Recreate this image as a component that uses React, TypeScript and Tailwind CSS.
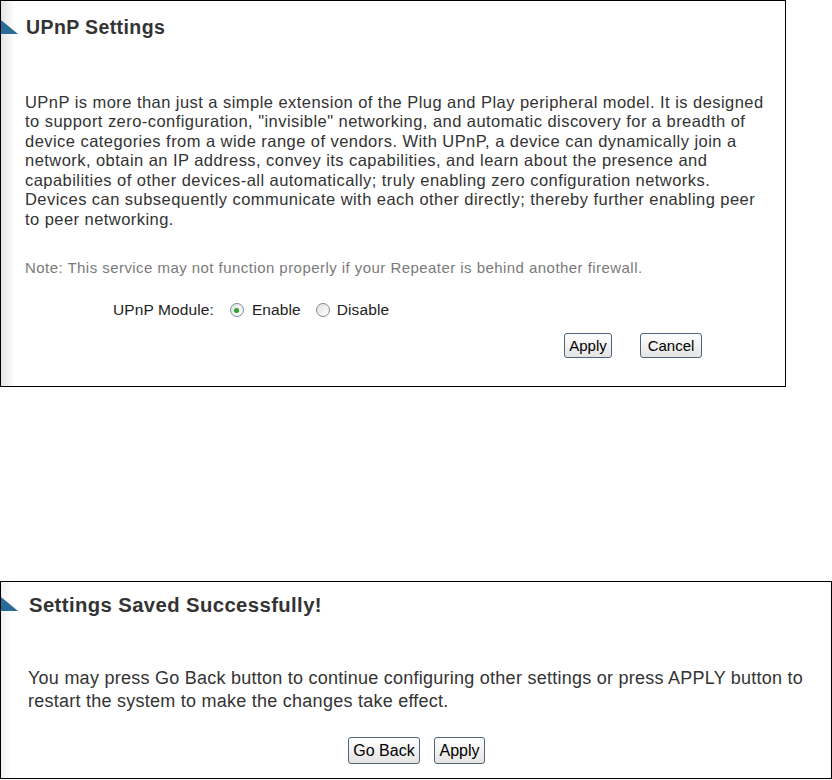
const font = "font-['Liberation_Sans',Arial,sans-serif]";

const upnpLines = [
  'UPnP is more than just a simple extension of the Plug and Play peripheral model. It is designed',
  'to support zero-configuration, "invisible" networking, and automatic discovery for a breadth of',
  'device categories from a wide range of vendors. With UPnP, a device can dynamically join a',
  'network, obtain an IP address, convey its capabilities, and learn about the presence and',
  'capabilities of other devices-all automatically; truly enabling zero configuration networks.',
  'Devices can subsequently communicate with each other directly; thereby further enabling peer',
  'to peer networking.',
];

const savedLines = [
  'You may press Go Back button to continue configuring other settings or press APPLY button to',
  'restart the system to make the changes take effect.',
];

function Triangle() {
  return (
    <svg width="17" height="14" viewBox="0 0 17 14" className="mb-[4px] shrink-0">
      <polygon points="0,0 17,14 0,14" fill="#2a6c97" />
    </svg>
  );
}

function Radio({ checked }: { checked?: boolean }) {
  return (
    <span className="inline-flex h-[14px] w-[14px] items-center justify-center rounded-full border border-[#7a8a99] bg-gradient-to-br from-[#e2e2e2] to-white">
      {checked && <span className="h-[5px] w-[5px] rounded-full bg-[#2aa52a]" />}
    </span>
  );
}

function Btn({ label, w }: { label: string; w: string }) {
  return (
    <button
      className={`${w} rounded-[3px] border border-[#4f6478] bg-gradient-to-b from-white to-[#e4e4e4] text-black leading-none`}
    >
      {label}
    </button>
  );
}

export default function App() {
  return (
    <div className={`${font} h-[780px] w-[832px] bg-white text-[#333]`}>
      {/* UPnP settings panel */}
      <div className="flex h-[387px] w-[786px] flex-col border border-black bg-[linear-gradient(to_right,#e4e4e4,#fff_14px)]">
        <div className="mt-[17px] flex items-end">
          <Triangle />
          <h1 className="ml-[8px] text-[19.5px] font-bold leading-none tracking-[0.4px] text-[#333]">UPnP Settings</h1>
        </div>
        <p className="mt-[55px] pl-[24px] text-[16.5px] leading-[19.5px] tracking-[0.45px] whitespace-nowrap">
          {upnpLines.map((l, i) => (
            <span key={i} className="block">{l}</span>
          ))}
        </p>
        <p className="mt-[30px] pl-[24px] text-[15px] leading-[18px] tracking-[0.45px] text-[#7a7a7a]">
          Note: This service may not function properly if your Repeater is behind another firewall.
        </p>
        <div className="mt-[24px] flex items-center pl-[112px] text-[15.5px] leading-[18px] tracking-[0.1px] text-[#222]">
          <span>UPnP Module:</span>
          <span className="ml-[16px] flex items-center gap-[8px]">
            <Radio checked />
            Enable
          </span>
          <span className="ml-[15px] flex items-center gap-[7px]">
            <Radio />
            Disable
          </span>
        </div>
        <div className="mt-[14px] flex gap-[28px] pl-[563px]">
          <Btn label="Apply" w="w-[48px] h-[25px] text-[15px]" />
          <Btn label="Cancel" w="w-[62px] h-[25px] text-[15px]" />
        </div>
      </div>

      {/* Saved panel */}
      <div className="mt-[194px] flex h-[198px] w-[832px] flex-col border border-black bg-[linear-gradient(to_right,#f0f0f0,#fff_10px)]">
        <div className="mt-[13px] flex items-end">
          <Triangle />
          <h2 className="ml-[11px] text-[20.3px] font-bold leading-none tracking-[0.4px] text-[#333]">
            Settings Saved Successfully!
          </h2>
        </div>
        <p className="mt-[52px] pl-[27px] text-[18px] leading-[23px] tracking-[0.25px] whitespace-nowrap text-[#333]">
          {savedLines.map((l, i) => (
            <span key={i} className="block">{l}</span>
          ))}
        </p>
        <div className="mt-[24px] flex justify-center gap-[14px] pl-[1px]">
          <Btn label="Go Back" w="w-[72px] h-[27px] text-[16px]" />
          <Btn label="Apply" w="w-[51px] h-[27px] text-[16px]" />
        </div>
      </div>
    </div>
  );
}
